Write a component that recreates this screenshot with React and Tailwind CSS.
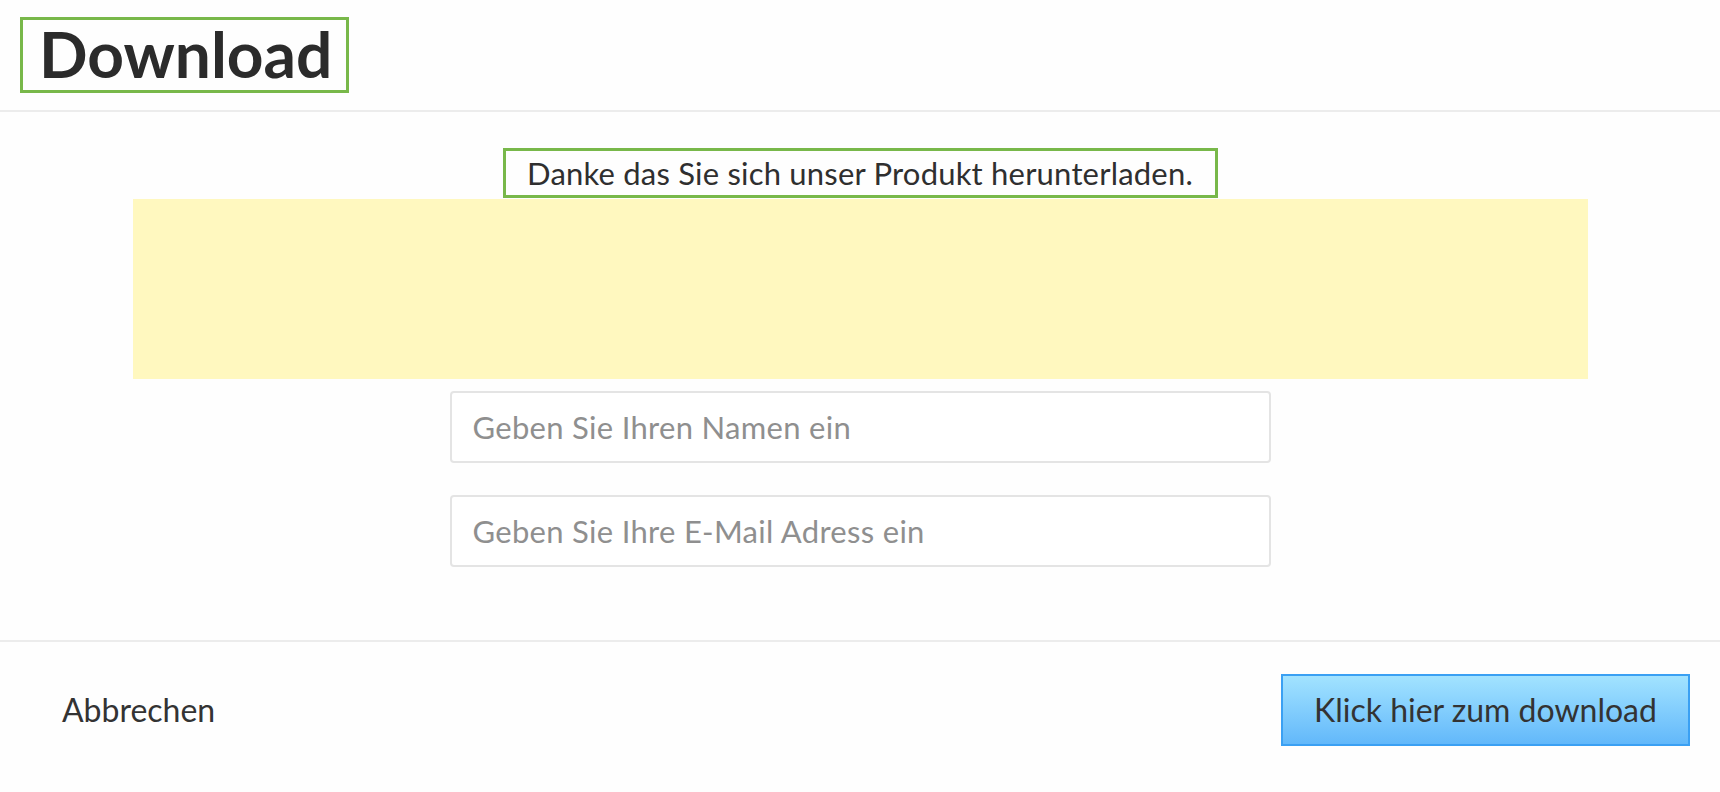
import React from 'react';

export default function App() {
    return (
        <div className="w-[1720px] h-[792px] bg-[#fefefe] flex flex-col text-[#2f2f2f]" style={{ fontFamily: 'Lato, "Open Sans", sans-serif' }}>

            {/* Header */}
            <div className="h-[112px] border-b-2 border-[#ececec] pl-[20px] pt-[17px]">
                <div className="inline-flex items-center h-[76px] w-[329px] border-[3px] border-[#78b84a] pl-[16px]">
                    <h1 className="text-[64px] font-bold leading-none text-[#2b2b2b] -mt-[2px]">Download</h1>
                </div>
            </div>

            {/* Body */}
            <div className="flex-1 flex flex-col items-center pt-[36px]">
                <div className="h-[50px] w-[715px] border-[3px] border-[#78b84a] flex items-center justify-center">
                    <p className="text-[31px] leading-none tracking-[0.2px]">Danke das Sie sich unser Produkt herunterladen.</p>
                </div>
                <div className="mt-[1px] w-[1455px] h-[180px] bg-[#fff8bf]"></div>
                <input
                    type="text"
                    placeholder="Geben Sie Ihren Namen ein"
                    className="mt-[12px] w-[821px] h-[72px] border-2 border-[#e4e4e4] rounded-[4px] bg-white pl-[21px] text-[31px] tracking-[0.3px] outline-none placeholder:text-[#8f8f8f]"
                />
                <input
                    type="email"
                    placeholder="Geben Sie Ihre E-Mail Adress ein"
                    className="mt-[32px] w-[821px] h-[72px] border-2 border-[#e4e4e4] rounded-[4px] bg-white pl-[21px] text-[31px] tracking-[0.3px] outline-none placeholder:text-[#8f8f8f]"
                />
            </div>

            {/* Footer */}
            <div className="h-[152px] border-t-2 border-[#ececec] flex items-center justify-between pl-[62px] pr-[30px] pb-[14px]">
                <button className="text-[32px] text-[#333] leading-none">Abbrechen</button>
                <button className="w-[409px] h-[72px] border-2 border-[#3aa0f3] bg-gradient-to-b from-[#a2e3ff] to-[#62b8fa] text-[32px] text-[#333] leading-none">
                    Klick hier zum download
                </button>
            </div>
        </div>
    );
}
